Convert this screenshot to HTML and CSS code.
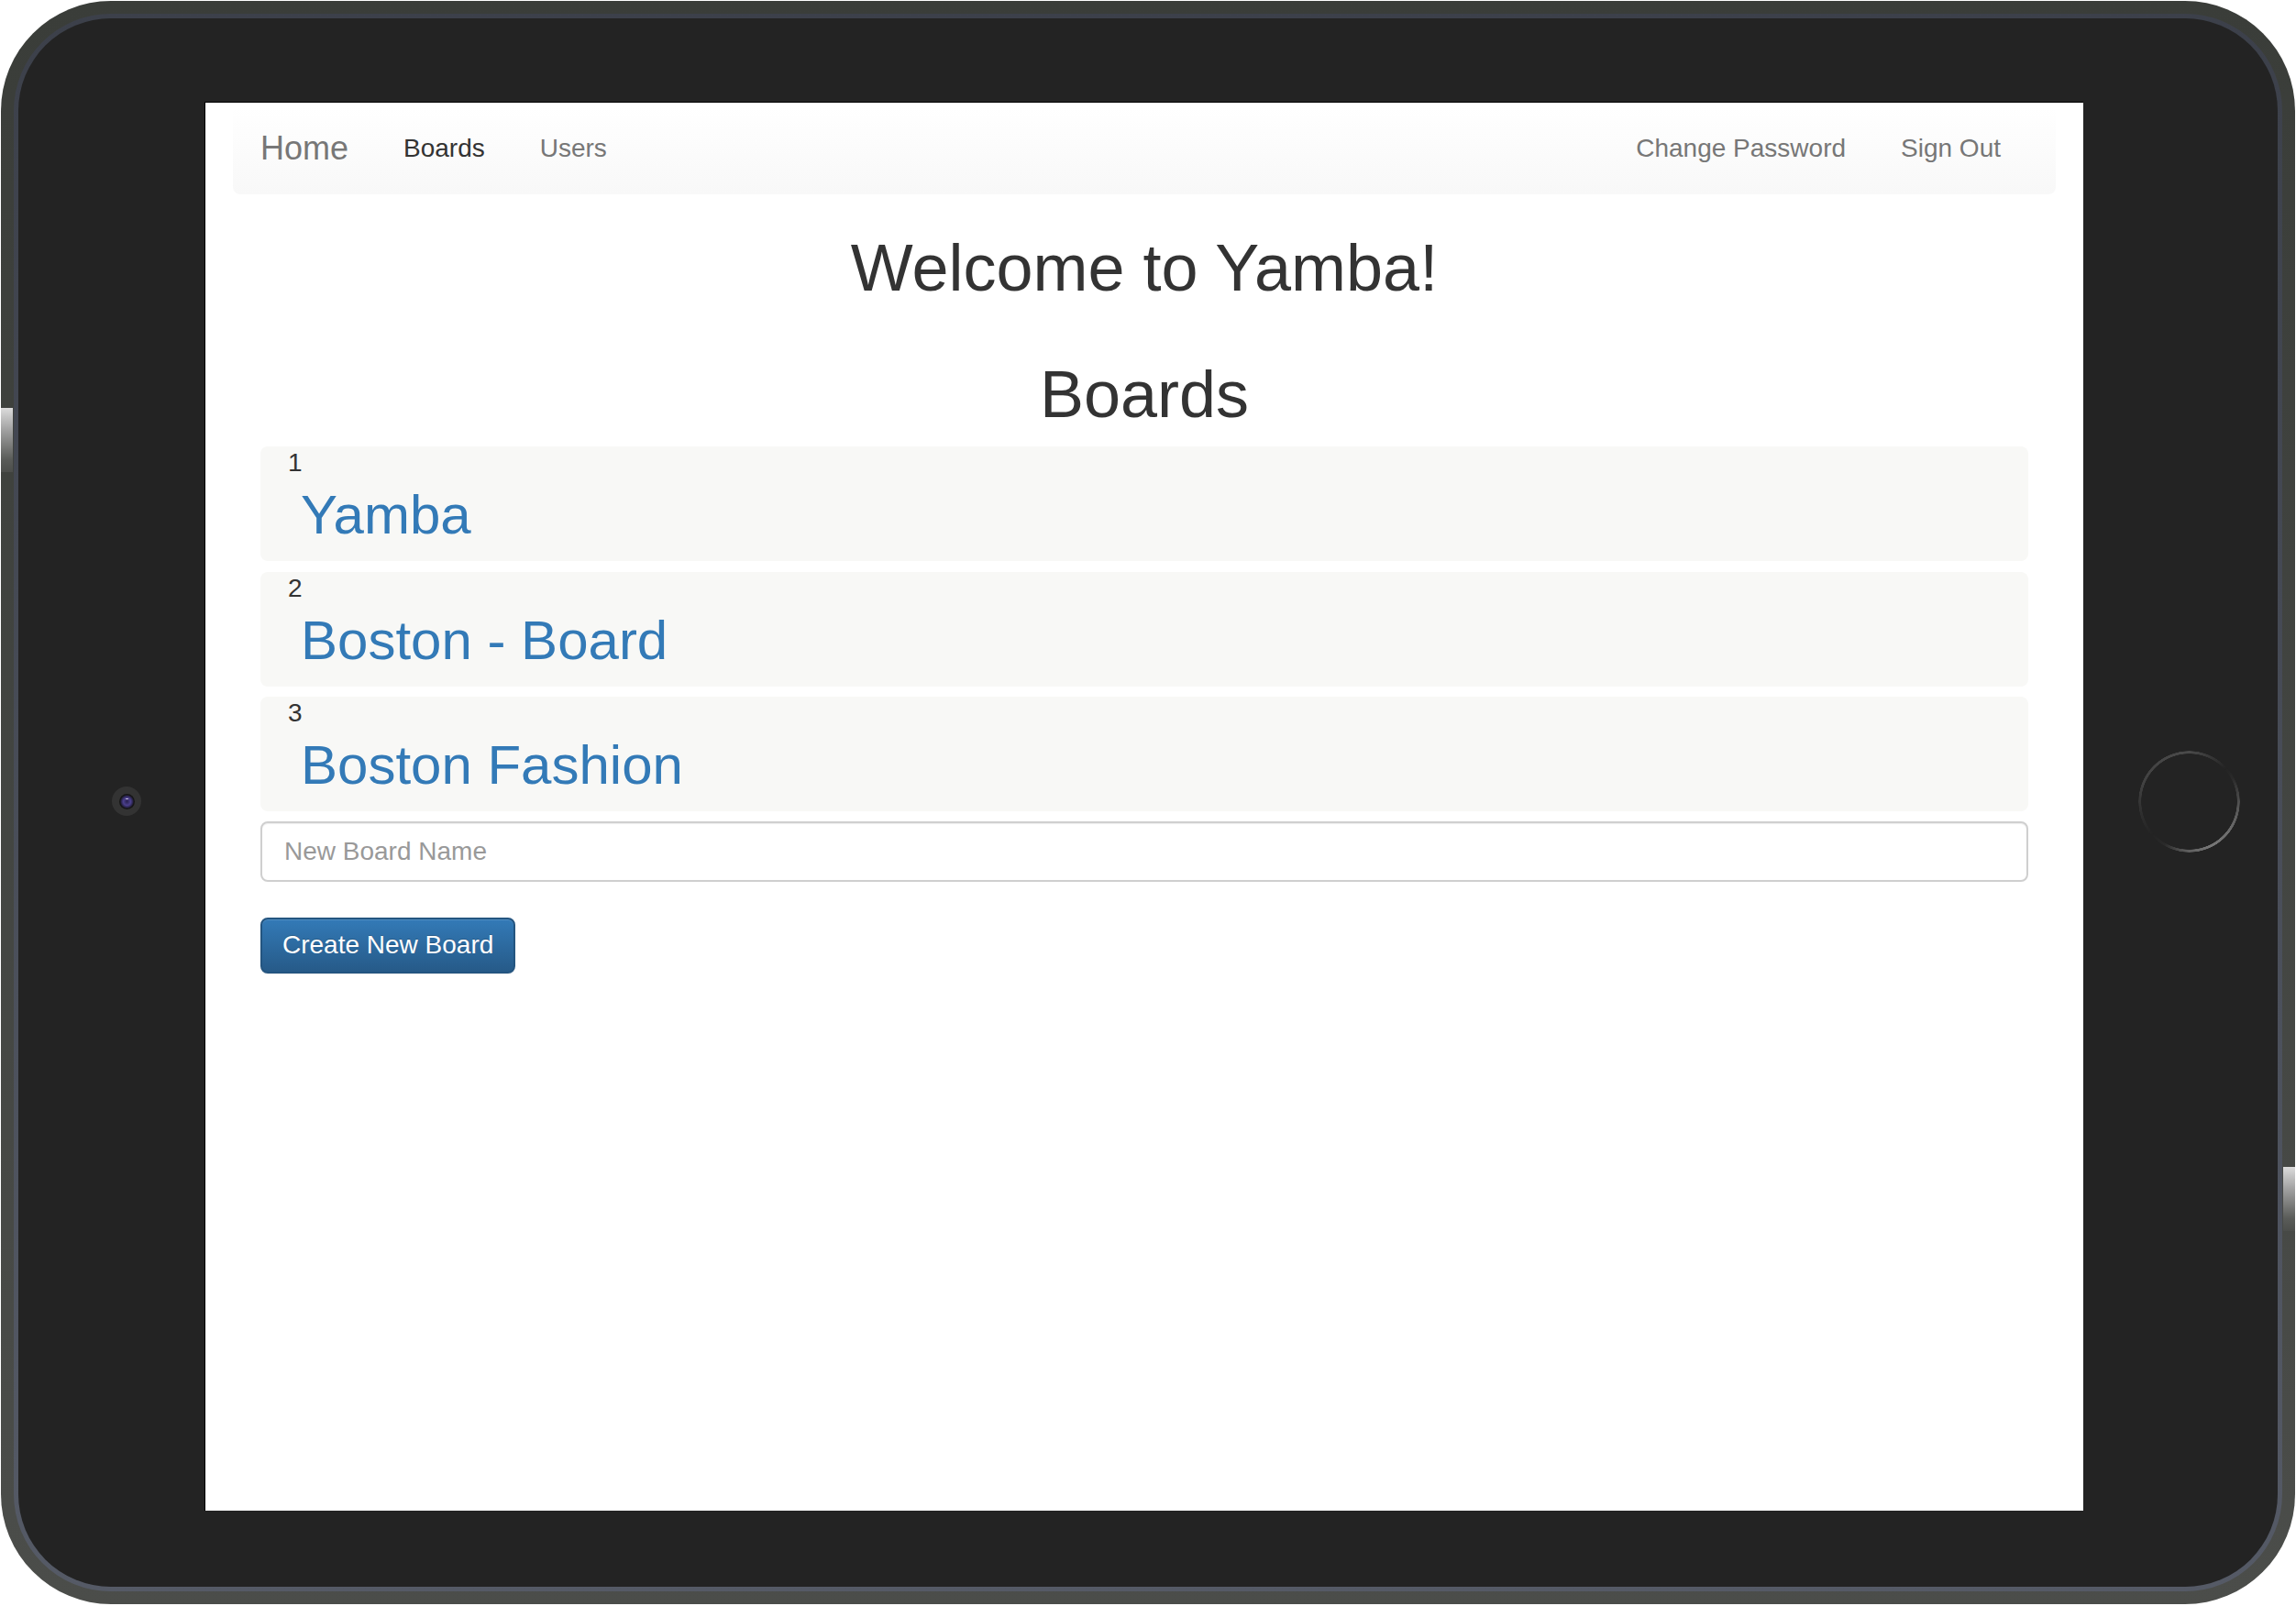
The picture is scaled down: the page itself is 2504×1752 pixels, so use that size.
FILE: index.html
```html
<!DOCTYPE html>
<html>
<head>
<meta charset="utf-8">
<title>Yamba</title>
<link rel="stylesheet" href="styles.css">
</head>
<body>
<div class="device">
  <div class="side-btn side-btn-left"></div>
  <div class="side-btn side-btn-right"></div>
  <div class="rim-line">
    <div class="bezel">
      <div class="bezel-left"><div class="camera"><div class="lens"></div></div></div>
      <div class="screen">
        <div class="page">
          <nav class="navbar">
            <a class="nav-item brand">Home</a>
            <a class="nav-item active">Boards</a>
            <a class="nav-item">Users</a>
            <span class="spacer"></span>
            <a class="nav-item">Change Password</a>
            <a class="nav-item">Sign Out</a>
          </nav>
          <div class="content">
            <h1 class="title welcome">Welcome to Yamba!</h1>
            <h1 class="title boards-title">Boards</h1>
            <ul class="board-list">
              <li class="well"><div class="num">1</div><a class="board-link">Yamba</a></li>
              <li class="well"><div class="num">2</div><a class="board-link">Boston - Board</a></li>
              <li class="well"><div class="num">3</div><a class="board-link">Boston Fashion</a></li>
            </ul>
            <input class="form-control" type="text" placeholder="New Board Name">
            <button class="btn-primary" type="button">Create New Board</button>
          </div>
        </div>
      </div>
      <div class="bezel-right"><div class="home-btn"></div></div>
    </div>
  </div>
</div>
</body>
</html>
```

FILE: styles.css
```css
html, body {
  margin: 0;
  padding: 0;
  background: #fff;
}
body {
  font-family: "Liberation Sans", Arial, sans-serif;
}
.device {
  position: relative;
  margin: 1px;
  width: 2502px;
  height: 1749px;
  box-sizing: border-box;
  padding: 14px;
  border-radius: 120px;
  background: linear-gradient(#3a3d39, #4b4d4a);
}
.side-btn {
  position: absolute;
  width: 13px;
  height: 70px;
  background: linear-gradient(#dcdcdc, #a0a0a0 35%, #5a5c59 80%, #4c4e4b);
}
.side-btn-left {
  left: 0;
  top: 444px;
}
.side-btn-right {
  left: 2489px;
  top: 1272px;
}
.rim-line {
  height: 100%;
  box-sizing: border-box;
  padding: 5px;
  border-radius: 106px;
  background: linear-gradient(#3c404a, #555a66);
}
.bezel {
  height: 100%;
  box-sizing: border-box;
  border-radius: 101px;
  background: #232323;
  display: flex;
  padding: 91px 0 83px 0;
}
.bezel-left {
  width: 203px;
  box-sizing: border-box;
  padding-left: 102px;
  display: flex;
  align-items: center;
}
.camera {
  width: 32px;
  height: 32px;
  border-radius: 50%;
  background: #333;
  display: flex;
  align-items: center;
  justify-content: center;
  margin-bottom: 11px;
}
.lens {
  width: 17px;
  height: 17px;
  border-radius: 50%;
  background: radial-gradient(circle at 50% 50%, #2a2250 0, #4b3f8c 4px, #2d2654 6px, #151515 7.5px);
  position: relative;
}
.lens::after {
  content: "";
  position: absolute;
  left: 7px;
  top: 5px;
  width: 3px;
  height: 1.5px;
  background: #c9c4de;
  border-radius: 1px;
}
.bezel-right {
  width: 212px;
  box-sizing: border-box;
  padding-left: 60px;
  display: flex;
  align-items: center;
}
.home-btn {
  width: 111px;
  height: 111px;
  border-radius: 50%;
  margin-bottom: 11px;
  background: conic-gradient(#4a4a4a 0deg, #353535 28deg, #232323 48deg, #2a2a2a 62deg, #555 95deg, #6e6e6e 130deg, #777 155deg, #5a5a5a 185deg, #2a2a2a 210deg, #232323 228deg, #2e2e2e 255deg, #414141 290deg, #4a4a4a 360deg);
  -webkit-mask: radial-gradient(circle, transparent 52px, #000 52.5px, #000 55px, transparent 55.5px);
  mask: radial-gradient(circle, transparent 52px, #000 52.5px, #000 55px, transparent 55.5px);
}
.screen {
  width: 2049px;
  height: 1537px;
  box-sizing: border-box;
  background: #fff;
  border-top: 1px solid #000;
  border-left: 1px solid #000;
  overflow: hidden;
}
.page {
  box-sizing: border-box;
  padding: 4px 30px 0 30px;
  color: #333;
}
.navbar {
  display: flex;
  align-items: flex-start;
  height: 96px;
  box-sizing: border-box;
  padding: 26px 30px 0 0;
  border-radius: 8px;
  background: linear-gradient(#fff, #f8f8f8);
}
.nav-item {
  padding: 0 30px;
  line-height: 40px;
  font-size: 28px;
  color: #777;
  text-decoration: none;
  white-space: nowrap;
}
.brand {
  font-size: 36px;
}
.nav-item.active {
  color: #333;
}
.spacer {
  flex: 1;
}
.content {
  padding: 0 30px;
}
.title {
  margin: 0;
  text-align: center;
  font-size: 72px;
  line-height: 80px;
  font-weight: normal;
  color: #333;
}
.welcome {
  margin-top: 40px;
}
.boards-title {
  margin-top: 58px;
}
.board-list {
  list-style: none;
  margin: 17px 0 0 0;
  padding: 0;
}
.well {
  height: 125px;
  box-sizing: border-box;
  padding: 3px 0 0 30px;
  border-radius: 8px;
  background: #f8f8f6;
}
.well + .well {
  margin-top: 11.5px;
}
.num {
  font-size: 28px;
  line-height: 30px;
  color: #333;
}
.board-link {
  display: block;
  margin-top: 9px;
  padding-left: 14px;
  font-size: 60px;
  line-height: 66px;
  color: #337ab7;
  text-decoration: none;
}
.form-control {
  display: block;
  margin: 10.7px 0 0 0;
  width: 100%;
  height: 66px;
  box-sizing: border-box;
  padding: 0 24px;
  border: 2px solid #cfcfcf;
  border-radius: 8px;
  box-shadow: inset 0 1px 1px rgba(0, 0, 0, 0.075);
  font-family: "Liberation Sans", Arial, sans-serif;
  font-size: 28px;
  color: #555;
  background: #fff;
  outline: none;
}
.form-control::placeholder {
  color: #999;
}
.btn-primary {
  display: block;
  margin: 39.3px 0 0 0;
  height: 61px;
  box-sizing: border-box;
  padding: 0 22px;
  border: 2px solid #245580;
  border-radius: 8px;
  background: linear-gradient(#337ab7, #265a88);
  box-shadow: inset 0 1px 0 rgba(255, 255, 255, 0.15), 0 1px 1px rgba(0, 0, 0, 0.075);
  text-shadow: 0 -1px 0 rgba(0, 0, 0, 0.2);
  font-family: "Liberation Sans", Arial, sans-serif;
  font-size: 28px;
  color: #fff;
}
```
